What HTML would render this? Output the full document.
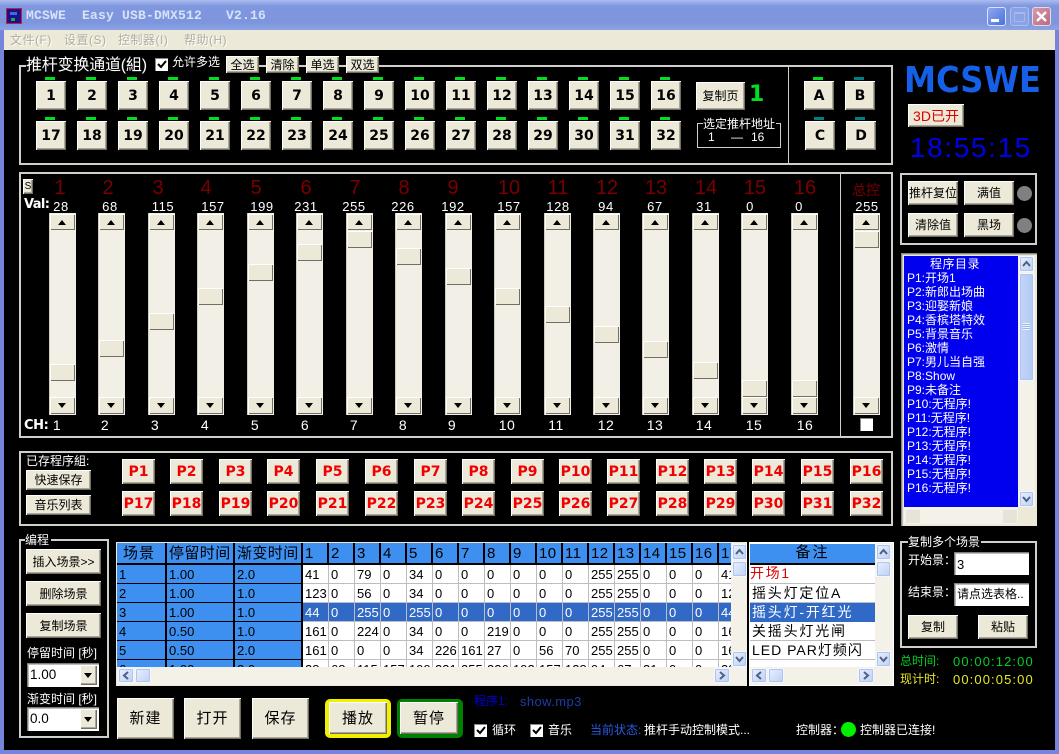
<!DOCTYPE html>
<html lang="zh"><head><meta charset="utf-8"><title>MCSWE</title>
<style>
html,body{margin:0;padding:0;background:#000}
#w{position:relative;width:1059px;height:754px;overflow:hidden;background:#000;font-family:"Liberation Sans","Noto Sans CJK SC",sans-serif;color:#fff;font-size:12px}
#w div{position:absolute;box-sizing:border-box;white-space:pre}
.b{background:#ece9d8;color:#000;box-shadow:inset 1px 1px 0 #fff,inset -1px -1px 0 #716f64,inset -2px -2px 0 #aca899;display:flex;align-items:center;justify-content:center;font-size:12px;line-height:1}
.c{width:30px;height:29px;font-weight:bold;font-size:14px;font-family:"DejaVu Sans","Liberation Sans",sans-serif}
.r1{top:81px}.r2{top:121px}
.l{width:10px;height:3px;background:#00e020}
.t1{top:77px}.t2{top:117px}
.f{border:2px solid #d0d0ca}
.g{background:#000;line-height:1}
.p{width:33px;height:25px;color:#f00000;font-weight:bold;font-size:14px;font-family:"DejaVu Sans","Liberation Sans",sans-serif}
.s{top:213px;width:27px;height:202px;background:#f2f0e6;box-shadow:inset 1px 0 0 #d0cdbd}
.s .u,.s .d,.s .h{left:1px;width:25px;background:#ece9d8;box-shadow:inset 1px 1px 0 #fff,inset -1px -1px 0 #716f64}
.s .u{top:1px;height:16px}
.s .d{top:184px;height:17px}
.s .h{height:17px}
.s .u::after,.s .d::after{content:"";position:absolute;left:8px;top:6px;border:4px solid transparent;border-top:0;border-bottom:5px solid #000}
.s .d::after{border-bottom:0;border-top:5px solid #000}
.n{top:178px;width:40px;text-align:center;font-size:20px;line-height:20px;color:#7a0000}
.v{top:200px;width:44px;text-align:center;font-size:13px;line-height:14px;letter-spacing:.6px}
.ch{top:418px;width:30px;text-align:center;font-size:14px;line-height:15px;letter-spacing:.5px}
.cb{width:13px;height:13px;background:#fff;box-shadow:inset 1px 1px 0 #888;color:#000}
.cb svg{position:absolute;left:1px;top:1px}
.li{left:907px;width:110px;font-size:12px;line-height:14px;height:14px}
.sb{background:#f4f2e8}
.x{background:linear-gradient(135deg,#eaf0fe,#bcd0f6);border:1px solid #f4f7ff;border-radius:2px;box-shadow:0 0 0 1px #b0c4ee inset}
.x svg{position:absolute;left:0;top:0}
table{border-collapse:separate;border-spacing:0;table-layout:fixed;color:#000;font-size:13px;position:absolute;left:0;top:0}
td{height:19px;padding:0 0 0 2px;border-right:1px solid #bdbdbd;border-bottom:1px solid #bdbdbd;background:#fff;overflow:hidden;white-space:nowrap;line-height:17px;box-sizing:border-box}
tr.h td{height:22px;background:#3d8ff0;border-right:2px solid #000;border-bottom:2px solid #000;font-size:15px;letter-spacing:.4px}
td.k{background:#3d8ff0;border-right:2px solid #000;border-bottom:1px solid #000}
tr.o td{background:#3169c6;color:#fff}
tr.o td.k{background:#3d8ff0;color:#000}
.in{background:#fff;color:#000;box-shadow:inset 1px 1px 0 #808078,inset 2px 2px 0 #bbb}
.m{top:31px;color:#b0ad9d;font-size:12px;line-height:18px;height:18px;text-shadow:1px 1px 0 #fff;letter-spacing:.5px}
.lbl{line-height:1}
.t{font-size:12px;line-height:15px;height:15px}
</style></head><body>
<div id="w">
<!-- title -->
<div style="left:0;top:0;width:1059px;height:30px;background:linear-gradient(#a9bbee 0,#7f97df 20%,#7d95dd 75%,#8ca3e4 100%)"></div>
<div style="left:6px;top:8px;width:16px;height:16px;background:#14148a;border:1px solid #c02040"></div>
<div style="left:10px;top:12px;width:7px;height:3px;background:#5060e0"></div>
<div style="left:11px;top:18px;width:4px;height:3px;background:#30a050"></div>
<div style="left:26px;top:8px;font:bold 13px/16px 'Liberation Mono',monospace;letter-spacing:.2px;color:#d8e2f8;height:16px">MCSWE  Easy USB-DMX512   V2.16</div>
<div style="left:987px;top:7px;width:19px;height:19px;background:linear-gradient(135deg,#8fa8f0,#4a70dc);border:1px solid #dbe4fa;border-radius:3px"></div>
<div style="left:991px;top:19px;width:8px;height:3px;background:#fff"></div>
<div style="left:1010px;top:7px;width:19px;height:19px;background:#8aa3e6;border:1px solid #a8bcee;border-radius:3px"></div>
<div style="left:1014px;top:12px;width:11px;height:10px;border:1px solid #a4b8ec;border-top-width:2px"></div>
<div style="left:1032px;top:7px;width:19px;height:19px;background:linear-gradient(135deg,#d69aa8,#b86a80);border:1px solid #e6d8e4;border-radius:3px"></div>
<svg style="position:absolute;left:1032px;top:7px" width="19" height="19"><path d="M5 5l9 9M14 5l-9 9" stroke="#fff" stroke-width="2.4" fill="none"/></svg>
<!-- menu -->
<div style="left:4px;top:30px;width:1051px;height:20px;background:#ece9d8"></div>
<div class="m" style="left:10px">文件(F)</div>
<div class="m" style="left:64px">设置(S)</div>
<div class="m" style="left:118px">控制器(I)</div>
<div class="m" style="left:184px">帮助(H)</div>
<!-- window borders -->
<div style="left:0;top:30px;width:4px;height:724px;background:#7585dc"></div>
<div style="left:1055px;top:30px;width:4px;height:724px;background:#7585dc"></div>
<div style="left:0;top:750px;width:1059px;height:4px;background:#7585dc"></div>

<!-- channel frame -->
<div class="f" style="left:19px;top:65px;width:874px;height:100px"></div>
<div style="left:788px;top:66px;width:1px;height:98px;background:#d0d0ca"></div>
<div class="g" style="left:26px;top:55px;width:200px;height:16px"></div>
<div style="left:26px;top:57px;width:122px;height:17px;font-size:16px;line-height:17px;letter-spacing:-.2px">推杆变换通道(組)</div>
<div class="cb" style="left:155px;top:58px"><svg width="11" height="11"><path d="M2 5l3 3 5-6" stroke="#000" stroke-width="2" fill="none"/></svg></div>
<div class="lbl" style="left:172px;top:56px;font-size:12px;height:14px">允许多选</div>
<div class="b" style="left:226px;top:56px;width:33px;height:17px">全选</div>
<div class="b" style="left:266px;top:56px;width:33px;height:17px">清除</div>
<div class="b" style="left:306px;top:56px;width:33px;height:17px">单选</div>
<div class="b" style="left:346px;top:56px;width:33px;height:17px">双选</div>

<div class="l t1" style="left:45px"></div><div class="l t1" style="left:86px"></div><div class="l t1" style="left:127px"></div><div class="l t1" style="left:168px"></div><div class="l t1" style="left:209px"></div><div class="l t1" style="left:250px"></div><div class="l t1" style="left:291px"></div><div class="l t1" style="left:332px"></div><div class="l t1" style="left:373px"></div><div class="l t1" style="left:414px"></div><div class="l t1" style="left:455px"></div><div class="l t1" style="left:496px"></div><div class="l t1" style="left:537px"></div><div class="l t1" style="left:578px"></div><div class="l t1" style="left:619px"></div><div class="l t1" style="left:660px"></div>
<div class="l t2" style="left:45px"></div><div class="l t2" style="left:86px"></div><div class="l t2" style="left:127px"></div><div class="l t2" style="left:168px"></div><div class="l t2" style="left:209px"></div><div class="l t2" style="left:250px"></div><div class="l t2" style="left:291px"></div><div class="l t2" style="left:332px"></div><div class="l t2" style="left:373px"></div><div class="l t2" style="left:414px"></div><div class="l t2" style="left:455px"></div><div class="l t2" style="left:496px"></div><div class="l t2" style="left:537px"></div><div class="l t2" style="left:578px"></div><div class="l t2" style="left:619px"></div><div class="l t2" style="left:660px"></div>

<div class="b c r1" style="left:36px">1</div><div class="b c r1" style="left:77px">2</div><div class="b c r1" style="left:118px">3</div><div class="b c r1" style="left:159px">4</div><div class="b c r1" style="left:200px">5</div><div class="b c r1" style="left:241px">6</div><div class="b c r1" style="left:282px">7</div><div class="b c r1" style="left:323px">8</div><div class="b c r1" style="left:364px">9</div><div class="b c r1" style="left:405px">10</div><div class="b c r1" style="left:446px">11</div><div class="b c r1" style="left:487px">12</div><div class="b c r1" style="left:528px">13</div><div class="b c r1" style="left:569px">14</div><div class="b c r1" style="left:610px">15</div><div class="b c r1" style="left:651px">16</div>
<div class="b c r2" style="left:36px">17</div><div class="b c r2" style="left:77px">18</div><div class="b c r2" style="left:118px">19</div><div class="b c r2" style="left:159px">20</div><div class="b c r2" style="left:200px">21</div><div class="b c r2" style="left:241px">22</div><div class="b c r2" style="left:282px">23</div><div class="b c r2" style="left:323px">24</div><div class="b c r2" style="left:364px">25</div><div class="b c r2" style="left:405px">26</div><div class="b c r2" style="left:446px">27</div><div class="b c r2" style="left:487px">28</div><div class="b c r2" style="left:528px">29</div><div class="b c r2" style="left:569px">30</div><div class="b c r2" style="left:610px">31</div><div class="b c r2" style="left:651px">32</div>

<div class="b" style="left:696px;top:82px;width:49px;height:28px">复制页</div>
<div style="left:749px;top:85px;width:14px;height:20px;color:#00e020;font:bold 22px/20px 'DejaVu Sans',sans-serif">1</div>
<div class="f" style="left:697px;top:123px;width:84px;height:25px;border-width:1.5px"></div>
<div class="g" style="left:703px;top:117px;width:73px;height:14px;font-size:12px;line-height:14px">选定推杆地址</div>
<div class="t" style="left:708px;top:130px">1</div>
<div class="t" style="left:731px;top:130px">—</div>
<div class="t" style="left:751px;top:130px">16</div>

<div class="l t1" style="left:813px"></div><div class="l t1" style="left:854px;background:#008080"></div>
<div class="l t2" style="left:814px;background:#008080"></div><div class="l t2" style="left:855px;background:#008080"></div>
<div class="b c r1" style="left:804px">A</div><div class="b c r1" style="left:845px">B</div>
<div class="b c r2" style="left:805px">C</div><div class="b c r2" style="left:846px">D</div>

<!-- logo -->
<svg style="position:absolute;left:900px;top:60px" width="150" height="40"><text x="4" y="32" textLength="137" lengthAdjust="spacingAndGlyphs" font-family="DejaVu Sans,sans-serif" font-weight="bold" font-size="36" fill="#1560e6">MCSWE</text></svg>
<div class="b" style="left:908px;top:104px;width:56px;height:23px;color:#e00000;font-size:14px">3D已开</div>
<div style="left:910px;top:133px;color:#0000e6;font-size:28px;line-height:30px;height:30px;letter-spacing:1.6px">18:55:15</div>

<!-- faders -->
<div class="f" style="left:19px;top:172px;width:874px;height:266px"></div>
<div style="left:840px;top:173px;width:1px;height:264px;background:#d0d0ca"></div>
<div class="b" style="left:23px;top:179px;width:10px;height:15px;font-size:10px">S</div>
<div style="left:24px;top:198px;font:bold 13px/14px 'DejaVu Sans',sans-serif;height:14px;letter-spacing:-.6px">Val:</div>
<div class="n" style="left:40px">1</div><div class="n" style="left:88px">2</div><div class="n" style="left:138px">3</div><div class="n" style="left:186px">4</div><div class="n" style="left:236px">5</div><div class="n" style="left:286px">6</div><div class="n" style="left:335px">7</div><div class="n" style="left:384px">8</div><div class="n" style="left:433px">9</div><div class="n" style="left:489px">10</div><div class="n" style="left:538px">11</div><div class="n" style="left:587px">12</div><div class="n" style="left:636px">13</div><div class="n" style="left:686px">14</div><div class="n" style="left:735px">15</div><div class="n" style="left:785px">16</div>
<div class="n" style="left:846px;font-size:14px;top:180px">总控</div>
<div class="v" style="left:39px">28</div><div class="v" style="left:88px">68</div><div class="v" style="left:141px">115</div><div class="v" style="left:191px">157</div><div class="v" style="left:240px">199</div><div class="v" style="left:284px">231</div><div class="v" style="left:332px">255</div><div class="v" style="left:381px">226</div><div class="v" style="left:431px">192</div><div class="v" style="left:487px">157</div><div class="v" style="left:536px">128</div><div class="v" style="left:584px">94</div><div class="v" style="left:633px">67</div><div class="v" style="left:682px">31</div><div class="v" style="left:728px">0</div><div class="v" style="left:777px">0</div><div class="v" style="left:845px">255</div>

<div class="s" style="left:49px"><div class="u"></div><div class="h" style="top:151px"></div><div class="d"></div></div>
<div class="s" style="left:98px"><div class="u"></div><div class="h" style="top:127px"></div><div class="d"></div></div>
<div class="s" style="left:148px"><div class="u"></div><div class="h" style="top:100px"></div><div class="d"></div></div>
<div class="s" style="left:197px"><div class="u"></div><div class="h" style="top:75px"></div><div class="d"></div></div>
<div class="s" style="left:247px"><div class="u"></div><div class="h" style="top:51px"></div><div class="d"></div></div>
<div class="s" style="left:296px"><div class="u"></div><div class="h" style="top:31px"></div><div class="d"></div></div>
<div class="s" style="left:346px"><div class="u"></div><div class="h" style="top:18px"></div><div class="d"></div></div>
<div class="s" style="left:395px"><div class="u"></div><div class="h" style="top:35px"></div><div class="d"></div></div>
<div class="s" style="left:445px"><div class="u"></div><div class="h" style="top:55px"></div><div class="d"></div></div>
<div class="s" style="left:494px"><div class="u"></div><div class="h" style="top:75px"></div><div class="d"></div></div>
<div class="s" style="left:544px"><div class="u"></div><div class="h" style="top:93px"></div><div class="d"></div></div>
<div class="s" style="left:593px"><div class="u"></div><div class="h" style="top:113px"></div><div class="d"></div></div>
<div class="s" style="left:642px"><div class="u"></div><div class="h" style="top:128px"></div><div class="d"></div></div>
<div class="s" style="left:692px"><div class="u"></div><div class="h" style="top:149px"></div><div class="d"></div></div>
<div class="s" style="left:741px"><div class="u"></div><div class="h" style="top:167px"></div><div class="d"></div></div>
<div class="s" style="left:791px"><div class="u"></div><div class="h" style="top:167px"></div><div class="d"></div></div>
<div class="s" style="left:853px"><div class="u"></div><div class="h" style="top:18px"></div><div class="d"></div></div>

<div style="left:24px;top:418px;font:bold 13px/15px 'DejaVu Sans',sans-serif;height:15px;letter-spacing:-.4px">CH:</div>
<div class="ch" style="left:42px">1</div><div class="ch" style="left:90px">2</div><div class="ch" style="left:140px">3</div><div class="ch" style="left:190px">4</div><div class="ch" style="left:240px">5</div><div class="ch" style="left:290px">6</div><div class="ch" style="left:339px">7</div><div class="ch" style="left:388px">8</div><div class="ch" style="left:437px">9</div><div class="ch" style="left:492px">10</div><div class="ch" style="left:541px">11</div><div class="ch" style="left:591px">12</div><div class="ch" style="left:640px">13</div><div class="ch" style="left:689px">14</div><div class="ch" style="left:739px">15</div><div class="ch" style="left:790px">16</div>
<div class="cb" style="left:860px;top:418px"></div>

<!-- right controls -->
<div class="f" style="left:900px;top:173px;width:137px;height:72px"></div>
<div class="b" style="left:908px;top:181px;width:50px;height:24px">推杆复位</div>
<div class="b" style="left:964px;top:181px;width:50px;height:24px">满值</div>
<div class="b" style="left:908px;top:213px;width:50px;height:24px">清除值</div>
<div class="b" style="left:964px;top:213px;width:50px;height:24px">黑场</div>
<div style="left:1017px;top:186px;width:15px;height:15px;border-radius:50%;background:#808080"></div>
<div style="left:1017px;top:218px;width:15px;height:15px;border-radius:50%;background:#808080"></div>

<!-- program list -->
<div style="left:901px;top:253px;width:136px;height:273px;background:#ece9d8;box-shadow:inset 1px 1px 0 #8a887c,inset 2px 2px 0 #bbb"></div>
<div style="left:904px;top:256px;width:114px;height:251px;background:#0000ee"></div>
<div class="sb" style="left:1018px;top:256px;width:17px;height:251px"></div>
<div class="x" style="left:1019px;top:256px;width:15px;height:16px"><svg width="13" height="14"><path d="M3 9l3.5-4 3.5 4" stroke="#4d6185" stroke-width="2" fill="none"/></svg></div>
<div class="x" style="left:1019px;top:273px;width:15px;height:108px;background:linear-gradient(90deg,#c3d5fb,#b2c8f4)"></div>
<div style="left:1023px;top:323px;width:7px;height:7px;background:repeating-linear-gradient(#eef3ff 0 1px,#9db6e8 1px 2px)"></div>
<div class="x" style="left:1019px;top:491px;width:15px;height:16px"><svg width="13" height="14"><path d="M3 5l3.5 4 3.5-4" stroke="#4d6185" stroke-width="2" fill="none"/></svg></div>
<div class="sb" style="left:904px;top:507px;width:114px;height:17px"></div>
<div style="left:905px;top:509px;width:16px;height:15px;background:#e6e4d8;border:1px solid #f4f3ea"></div>
<div style="left:1002px;top:509px;width:16px;height:15px;background:#e6e4d8;border:1px solid #f4f3ea"></div>
<div style="left:904px;top:257px;width:102px;text-align:center;font-size:12px;line-height:14px;height:14px;letter-spacing:.5px">程序目录</div>
<div class="li" style="top:271px">P1:开场1</div>
<div class="li" style="top:285px">P2:新郎出场曲</div>
<div class="li" style="top:299px">P3:迎娶新娘</div>
<div class="li" style="top:313px">P4:香槟塔特效</div>
<div class="li" style="top:327px">P5:背景音乐</div>
<div class="li" style="top:341px">P6:激情</div>
<div class="li" style="top:355px">P7:男儿当自强</div>
<div class="li" style="top:369px;font-size:12px">P8:Show</div>
<div class="li" style="top:383px">P9:未备注</div>
<div class="li" style="top:397px">P10:无程序!</div>
<div class="li" style="top:411px">P11:无程序!</div>
<div class="li" style="top:425px">P12:无程序!</div>
<div class="li" style="top:439px">P13:无程序!</div>
<div class="li" style="top:453px">P14:无程序!</div>
<div class="li" style="top:467px">P15:无程序!</div>
<div class="li" style="top:481px">P16:无程序!</div>

<!-- stored programs -->
<div class="f" style="left:19px;top:451px;width:874px;height:75px"></div>
<div style="left:26px;top:454px;font-size:12px;line-height:14px;height:14px">已存程序組:</div>
<div class="b" style="left:26px;top:470px;width:65px;height:20px">快速保存</div>
<div class="b" style="left:26px;top:495px;width:65px;height:20px">音乐列表</div>
<div class="b p" style="left:122px;top:459px">P1</div><div class="b p" style="left:170px;top:459px">P2</div><div class="b p" style="left:219px;top:459px">P3</div><div class="b p" style="left:267px;top:459px">P4</div><div class="b p" style="left:316px;top:459px">P5</div><div class="b p" style="left:365px;top:459px">P6</div><div class="b p" style="left:414px;top:459px">P7</div><div class="b p" style="left:462px;top:459px">P8</div><div class="b p" style="left:511px;top:459px">P9</div><div class="b p" style="left:559px;top:459px">P10</div><div class="b p" style="left:607px;top:459px">P11</div><div class="b p" style="left:656px;top:459px">P12</div><div class="b p" style="left:704px;top:459px">P13</div><div class="b p" style="left:752px;top:459px">P14</div><div class="b p" style="left:801px;top:459px">P15</div><div class="b p" style="left:850px;top:459px">P16</div>
<div class="b p" style="left:122px;top:491px">P17</div><div class="b p" style="left:170px;top:491px">P18</div><div class="b p" style="left:219px;top:491px">P19</div><div class="b p" style="left:267px;top:491px">P20</div><div class="b p" style="left:316px;top:491px">P21</div><div class="b p" style="left:365px;top:491px">P22</div><div class="b p" style="left:414px;top:491px">P23</div><div class="b p" style="left:462px;top:491px">P24</div><div class="b p" style="left:511px;top:491px">P25</div><div class="b p" style="left:559px;top:491px">P26</div><div class="b p" style="left:607px;top:491px">P27</div><div class="b p" style="left:656px;top:491px">P28</div><div class="b p" style="left:704px;top:491px">P29</div><div class="b p" style="left:752px;top:491px">P30</div><div class="b p" style="left:801px;top:491px">P31</div><div class="b p" style="left:850px;top:491px">P32</div>

<!-- programming -->
<div class="f" style="left:19px;top:539px;width:90px;height:199px"></div>
<div class="g" style="left:25px;top:534px;width:26px;height:13px;font-size:12px;line-height:13px">编程</div>
<div class="b" style="left:26px;top:549px;width:75px;height:25px">插入场景&gt;&gt;</div>
<div class="b" style="left:26px;top:581px;width:75px;height:25px">删除场景</div>
<div class="b" style="left:26px;top:613px;width:75px;height:25px">复制场景</div>
<div style="left:27px;top:646px;font-size:12px;line-height:14px;height:14px">停留时间 [秒]</div>
<div class="in" style="left:27px;top:663px;width:72px;height:24px"></div>
<div style="left:30px;top:667px;color:#000;font-size:13.5px;line-height:16px;height:16px">1.00</div>
<div class="b" style="left:80px;top:665px;width:17px;height:20px"></div>
<div style="left:84px;top:673px;border:4px solid transparent;border-top:5px solid #000;border-bottom:0;width:0;height:0"></div>
<div style="left:27px;top:692px;font-size:12px;line-height:14px;height:14px">渐变时间 [秒]</div>
<div class="in" style="left:27px;top:707px;width:72px;height:24px"></div>
<div style="left:30px;top:711px;color:#000;font-size:13.5px;line-height:16px;height:16px">0.0</div>
<div class="b" style="left:80px;top:709px;width:17px;height:20px"></div>
<div style="left:84px;top:717px;border:4px solid transparent;border-top:5px solid #000;border-bottom:0;width:0;height:0"></div>

<!-- grid -->
<div style="left:116px;top:542px;width:631px;height:144px;background:#ece9d8"></div>
<div style="left:117px;top:543px;width:614px;height:124px;overflow:hidden;background:#fff">
<table style="width:628px"><colgroup><col style="width:50px"><col style="width:68px"><col style="width:68px"><col span="17" style="width:26px"></colgroup>
<tr class="h"><td style="padding-left:6px;letter-spacing:1px">场景</td><td>停留时间</td><td>渐变时间</td><td>1</td><td>2</td><td>3</td><td>4</td><td>5</td><td>6</td><td>7</td><td>8</td><td>9</td><td>10</td><td>11</td><td>12</td><td>13</td><td>14</td><td>15</td><td>16</td><td>17</td></tr>
<tr><td class="k">1</td><td class="k">1.00</td><td class="k">2.0</td><td>41</td><td>0</td><td>79</td><td>0</td><td>34</td><td>0</td><td>0</td><td>0</td><td>0</td><td>0</td><td>0</td><td>255</td><td>255</td><td>0</td><td>0</td><td>0</td><td>41</td></tr>
<tr><td class="k">2</td><td class="k">1.00</td><td class="k">1.0</td><td>123</td><td>0</td><td>56</td><td>0</td><td>34</td><td>0</td><td>0</td><td>0</td><td>0</td><td>0</td><td>0</td><td>255</td><td>255</td><td>0</td><td>0</td><td>0</td><td>123</td></tr>
<tr class="o"><td class="k">3</td><td class="k">1.00</td><td class="k">1.0</td><td>44</td><td>0</td><td>255</td><td>0</td><td>255</td><td>0</td><td>0</td><td>0</td><td>0</td><td>0</td><td>0</td><td>255</td><td>255</td><td>0</td><td>0</td><td>0</td><td>44</td></tr>
<tr><td class="k">4</td><td class="k">0.50</td><td class="k">1.0</td><td>161</td><td>0</td><td>224</td><td>0</td><td>34</td><td>0</td><td>0</td><td>219</td><td>0</td><td>0</td><td>0</td><td>255</td><td>255</td><td>0</td><td>0</td><td>0</td><td>161</td></tr>
<tr><td class="k">5</td><td class="k">0.50</td><td class="k">2.0</td><td>161</td><td>0</td><td>0</td><td>0</td><td>34</td><td>226</td><td>161</td><td>27</td><td>0</td><td>56</td><td>70</td><td>255</td><td>255</td><td>0</td><td>0</td><td>0</td><td>161</td></tr>
<tr><td class="k">6</td><td class="k">1.00</td><td class="k">2.0</td><td>28</td><td>68</td><td>115</td><td>157</td><td>199</td><td>231</td><td>255</td><td>226</td><td>192</td><td>157</td><td>128</td><td>94</td><td>67</td><td>31</td><td>0</td><td>0</td><td>28</td></tr>
</table></div>
<div class="sb" style="left:731px;top:543px;width:16px;height:142px"></div>
<div class="x" style="left:732px;top:544px;width:15px;height:16px"><svg width="13" height="14"><path d="M3 9l3.5-4 3.5 4" stroke="#4d6185" stroke-width="2" fill="none"/></svg></div>
<div class="x" style="left:732px;top:561px;width:15px;height:16px"></div>
<div class="x" style="left:732px;top:651px;width:15px;height:16px"><svg width="13" height="14"><path d="M3 5l3.5 4 3.5-4" stroke="#4d6185" stroke-width="2" fill="none"/></svg></div>
<div class="sb" style="left:117px;top:667px;width:614px;height:18px"></div>
<div class="x" style="left:118px;top:668px;width:16px;height:15px"><svg width="14" height="13"><path d="M9 3l-4 3.5 4 3.5" stroke="#4d6185" stroke-width="2" fill="none"/></svg></div>
<div class="x" style="left:135px;top:668px;width:16px;height:15px"></div>
<div class="x" style="left:714px;top:668px;width:16px;height:15px"><svg width="14" height="13"><path d="M5 3l4 3.5-4 3.5" stroke="#4d6185" stroke-width="2" fill="none"/></svg></div>

<!-- remarks -->
<div style="left:749px;top:542px;width:145px;height:144px;background:#fff"></div>
<div style="left:750px;top:544px;width:125px;height:21px;background:#3d8ff0;border-bottom:2px solid #000;color:#000;text-align:center;font-size:15px;line-height:18px;letter-spacing:2px">备注</div>
<div style="left:750px;top:565px;width:125px;height:19px;color:#e00000;font-size:14px;line-height:17px;letter-spacing:1.6px;border-bottom:1px solid #bdbdbd">开场1</div>
<div style="left:750px;top:584px;width:125px;height:19px;color:#000;font-size:14px;line-height:19px;letter-spacing:1.8px;padding-left:2px;border-bottom:1px solid #bdbdbd">摇头灯定位A</div>
<div style="left:750px;top:603px;width:125px;height:19px;background:#3169c6;color:#fff;font-size:14px;line-height:19px;letter-spacing:1.8px;padding-left:2px">摇头灯-开红光</div>
<div style="left:750px;top:622px;width:125px;height:19px;color:#000;font-size:14px;line-height:19px;letter-spacing:1.8px;padding-left:2px;border-bottom:1px solid #bdbdbd">关摇头灯光闸</div>
<div style="left:750px;top:641px;width:125px;height:19px;color:#000;font-size:14px;line-height:19px;letter-spacing:1px;padding-left:2px;border-bottom:1px solid #bdbdbd">LED PAR灯频闪</div>
<div class="sb" style="left:875px;top:543px;width:18px;height:142px"></div>
<div class="x" style="left:876px;top:544px;width:15px;height:16px"><svg width="13" height="14"><path d="M3 9l3.5-4 3.5 4" stroke="#4d6185" stroke-width="2" fill="none"/></svg></div>
<div class="x" style="left:876px;top:561px;width:15px;height:16px"></div>
<div class="x" style="left:876px;top:651px;width:15px;height:16px"><svg width="13" height="14"><path d="M3 5l3.5 4 3.5-4" stroke="#4d6185" stroke-width="2" fill="none"/></svg></div>
<div class="sb" style="left:750px;top:667px;width:125px;height:18px"></div>
<div class="x" style="left:751px;top:668px;width:16px;height:15px"><svg width="14" height="13"><path d="M9 3l-4 3.5 4 3.5" stroke="#4d6185" stroke-width="2" fill="none"/></svg></div>
<div class="x" style="left:768px;top:668px;width:16px;height:15px"></div>
<div class="x" style="left:858px;top:668px;width:16px;height:15px"><svg width="14" height="13"><path d="M5 3l4 3.5-4 3.5" stroke="#4d6185" stroke-width="2" fill="none"/></svg></div>

<!-- copy scenes -->
<div class="f" style="left:900px;top:541px;width:137px;height:107px"></div>
<div class="g" style="left:908px;top:535px;width:73px;height:14px;font-size:12px;line-height:14px">复制多个场景</div>
<div style="left:908px;top:552px;font-size:12px;line-height:16px;height:16px">开始景：</div>
<div class="in" style="left:954px;top:552px;width:75px;height:23px;padding:6px 0 0 3px;font-size:13px;line-height:14px">3</div>
<div style="left:908px;top:584px;font-size:12px;line-height:16px;height:16px">结束景：</div>
<div class="in" style="left:954px;top:583px;width:75px;height:23px;padding:4px 0 0 3px;font-size:12px;line-height:15px">请点选表格..</div>
<div class="b" style="left:908px;top:615px;width:50px;height:24px">复制</div>
<div class="b" style="left:978px;top:615px;width:50px;height:24px">粘贴</div>
<div class="t" style="left:900px;top:654px;color:#00d020">总时间:</div>
<div style="left:953px;top:654px;color:#00d020;font-size:13px;line-height:15px;height:15px;letter-spacing:1.1px">00:00:12:00</div>
<div class="t" style="left:900px;top:672px;color:#e8e820">现计时:</div>
<div style="left:953px;top:672px;color:#e8e820;font-size:13px;line-height:15px;height:15px;letter-spacing:1.1px">00:00:05:00</div>

<!-- bottom -->
<div class="b" style="left:117px;top:698px;width:57px;height:41px;font-size:15px;letter-spacing:1px">新建</div>
<div class="b" style="left:184px;top:698px;width:57px;height:41px;font-size:15px;letter-spacing:1px">打开</div>
<div class="b" style="left:252px;top:698px;width:57px;height:41px;font-size:15px;letter-spacing:1px">保存</div>
<div style="left:325px;top:699px;width:66px;height:39px;background:#f0f000;border-radius:5px"></div>
<div class="b" style="left:329px;top:702px;width:58px;height:32px;font-size:15px;letter-spacing:1px">播放</div>
<div style="left:397px;top:699px;width:66px;height:39px;background:#008000;border-radius:5px"></div>
<div class="b" style="left:400px;top:702px;width:58px;height:32px;font-size:15px;letter-spacing:1px">暂停</div>
<div class="t" style="left:474px;top:694px;color:#0000d8">程序1:</div>
<div style="left:520px;top:694px;color:#1c3ca8;font-size:13px;line-height:15px;height:15px;letter-spacing:.4px">show.mp3</div>
<div class="cb" style="left:474px;top:724px"><svg width="11" height="11"><path d="M2 5l3 3 5-6" stroke="#000" stroke-width="2" fill="none"/></svg></div>
<div class="t" style="left:492px;top:723px">循环</div>
<div class="cb" style="left:530px;top:724px"><svg width="11" height="11"><path d="M2 5l3 3 5-6" stroke="#000" stroke-width="2" fill="none"/></svg></div>
<div class="t" style="left:548px;top:723px">音乐</div>
<div class="t" style="left:590px;top:723px;color:#2a5ae0">当前状态:</div>
<div class="t" style="left:644px;top:723px">推杆手动控制模式...</div>
<div class="t" style="left:796px;top:723px">控制器：</div>
<div style="left:841px;top:722px;width:15px;height:15px;border-radius:50%;background:#00f000"></div>
<div class="t" style="left:860px;top:723px">控制器已连接!</div>
</div>
</body></html>
